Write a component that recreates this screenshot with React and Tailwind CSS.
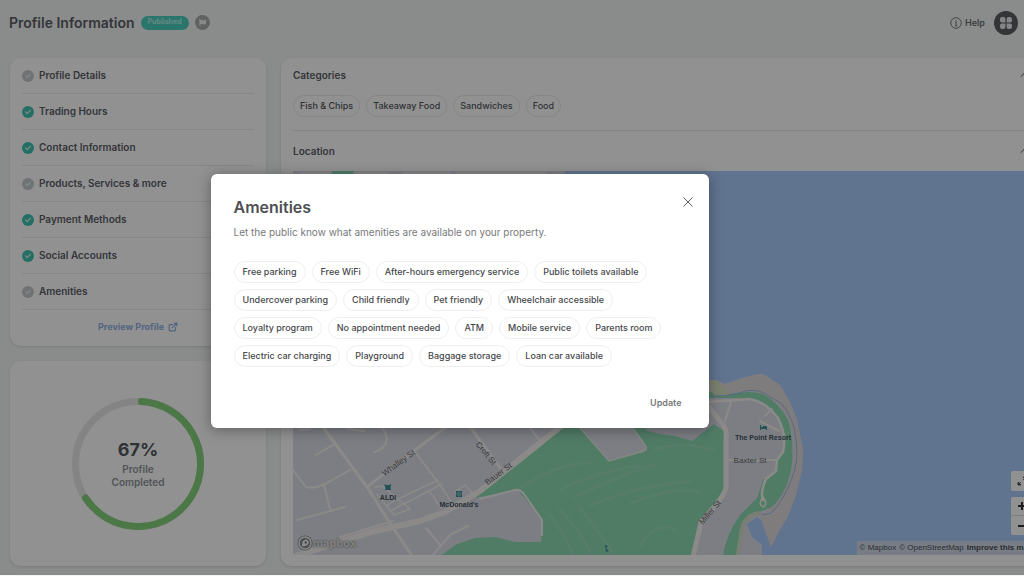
import { useState } from 'react';
import { FaFlag, FaCheck } from 'react-icons/fa';
import { FiExternalLink, FiChevronUp } from 'react-icons/fi';

const steps = [
    { name: 'Profile Details', done: false },
    { name: 'Trading Hours', done: true },
    { name: 'Contact Information', done: true },
    { name: 'Products, Services & more', done: false },
    { name: 'Payment Methods', done: true },
    { name: 'Social Accounts', done: true },
    { name: 'Amenities', done: false },
];

const categories = ['Fish & Chips', 'Takeaway Food', 'Sandwiches', 'Food'];

const amenityRows = [
    ['Free parking', 'Free WiFi', 'After-hours emergency service', 'Public toilets available'],
    ['Undercover parking', 'Child friendly', 'Pet friendly', 'Wheelchair accessible'],
    ['Loyalty program', 'No appointment needed', 'ATM', 'Mobile service', 'Parents room'],
    ['Electric car charging', 'Playground', 'Baggage storage', 'Loan car available'],
];

const Header = () => (
    <header className="flex h-[58px] items-center pb-[13px] pl-[9px] pr-[6px]">
        <h1 className="text-[14px] font-semibold text-[#5c6066]">Profile Information</h1>
        <span className="ml-[6px] flex h-[14px] items-center rounded-full bg-[#4bd0bf] px-[7px] text-[7px] font-bold text-[#b5f0e8]">
            Published
        </span>
        <button aria-label="Flag profile" className="ml-[6px] flex size-[15px] items-center justify-center rounded-full bg-[#a9abab]">
            <FaFlag className="size-[7px] text-[#f0f2f2]" />
        </button>
        <button className="ml-auto flex items-center gap-[3px] text-[9px] font-semibold text-[#6c7075]">
            <svg viewBox="0 0 12 12" className="size-3" fill="none" stroke="currentColor">
                <circle cx="6" cy="6" r="5.3" strokeWidth="0.9" />
                <path d="M5 5h1.2v3.6M5 8.7h2.4M6 2.8v1" strokeWidth="0.9" />
            </svg>
            Help
        </button>
        <button aria-label="Apps" className="ml-[9px] flex size-6 items-center justify-center rounded-full bg-[#5b5d60]">
            <svg viewBox="0 0 14 14" className="size-[14px]" fill="#e8eaea">
                <path d="M3.300 1h1.200a1.900 1.900 0 0 1 1.900 1.900v3.500H2.900A1.900 1.900 0 0 1 1 4.500V3.100A2.100 2.100 0 0 1 3.300 1z" />
                <path d="M9.500 1h1.200A2.200 2.200 0 0 1 13 3.200v1.300a1.900 1.900 0 0 1-1.900 1.900H7.600V2.900A1.900 1.900 0 0 1 9.500 1z" />
                <path d="M2.900 7.600h3.500v3.500A1.900 1.900 0 0 1 4.500 13H3.200A2.200 2.200 0 0 1 1 10.800V9.500a1.900 1.900 0 0 1 1.900-1.900z" />
                <path d="M7.600 7.600h3.500A1.900 1.900 0 0 1 13 9.500v1.300a2.200 2.200 0 0 1-2.200 2.200H9.500a1.900 1.900 0 0 1-1.900-1.900z" />
            </svg>
        </button>
    </header>
);

const StepList = () => (
    <nav className="h-[288px] rounded-[11px] bg-white px-3 shadow-sm">
        <ul>
            {steps.map((step) => (
                <li key={step.name} className="flex h-9 items-center border-b border-[#ececec]">
                    <span className={`flex size-[12px] items-center justify-center rounded-full ${step.done ? 'bg-[#3fc4ae]' : 'bg-[#c6caca]'}`}>
                        <FaCheck className="size-[6px] text-[#e6f2f0]" />
                    </span>
                    <a href="#" className="ml-[5px] text-[10px] font-semibold text-[#5c6066]">{step.name}</a>
                </li>
            ))}
        </ul>
        <a href="#" className="flex h-[34px] items-center justify-center gap-1 text-[9px] font-bold text-[#8fb0e4]">
            Preview Profile
            <FiExternalLink className="size-[10px]" strokeWidth={3} />
        </a>
    </nav>
);

const Progress = () => (
    <section className="relative flex h-[205px] items-center justify-center rounded-[11px] bg-white shadow-sm">
        <svg viewBox="0 0 132 132" className="size-[132px]" fill="none">
            <circle cx="66" cy="66" r="62.5" stroke="#e9e9e9" strokeWidth="7" />
            <path d="M69.500 3.600A62.500 62.500 0 1 1 13.600 100" stroke="#87d27c" strokeWidth="7" strokeLinecap="round" />
        </svg>
        <div className="absolute inset-0 flex flex-col items-center justify-center text-[10px] leading-[13px] font-semibold text-[#8f9498]">
            <strong className="mb-0.5 text-[18px] leading-[22px] font-bold text-[#54585e]">67%</strong>
            <span>Profile</span>
            <span>Completed</span>
        </div>
    </section>
);

const MapView = () => (
    <div className="relative h-[384px] overflow-hidden bg-[#aacafb]">
        <svg viewBox="293 171 731 384" preserveAspectRatio="xMinYMin slice" className="size-full" fill="none">
            {/* land */}
            <path
                d="M293 171H565V300L700 384L716 380L725 384L743 378L761 373.500L768 377L780 385L790 402L797 420L803 450L802 470L796 495L788 516L777 535L771 547L762 521L757 517L747 524L750 532L753 538L762 545V555H293Z"
                fill="#dbdee8"
            />
            <path
                d="M705 381L712 380L725 384L743 378L761 373.500L768 377L780 385L790 402L797 420L803 450L802 470L796 495L788 516L777 535L771 547L761 519L790 480L795 440L780 405L755 391L705 395Z"
                fill="#dddbdc"
            />
            <path d="M332 171H353V175H332Z" fill="#8edab4" />
            {/* parks */}
            <path
                d="M562 428L475 498L518 490L542 520L541 542H515L495 537L475 538L455 545L442 555H693L700 525L725 495V432L714 424L692 441L675 436L660 434L648 431L640 424Z"
                fill="#8edab4"
            />
            <path
                d="M700 388L722 396Q747 389 763 394Q779 403 788 420Q794 440 792 464Q788 492 772 507Q758 512 749 518Q739 532 736 555H723Q726 535 740 515L757 498L763 480L775 472L778 460Q786 452 785 434Q779 412 758 401L740 398H700Z"
                fill="#8edab4"
            />
            <path d="M580 428L609 461L644 451Q648 449 645 445L633 428Z" fill="#dbdee8" stroke="#e9eee3" strokeWidth="1.500" />
            <path d="M710 380L716 380L730 394L714 396Z" fill="#d9e3c4" />
            <g stroke="#98dcb9" strokeWidth="3" strokeLinecap="round">
                <path d="M520 488Q560 462 590 463M575 497Q620 475 655 464M590 506Q640 484 690 482M560 490Q600 470 640 466M630 504Q670 487 700 492" />
                <path d="M550 515Q565 535 572 553M580 508Q605 540 612 552M560 510Q580 530 590 552M640 547Q655 520 675 530M655 450Q680 440 714 450" />
            </g>
            <g stroke="#7fc59a" strokeWidth="0.700" strokeDasharray="1 2">
                <circle cx="533" cy="491" r="3" />
                <circle cx="539" cy="500" r="4" />
                <circle cx="555" cy="510" r="3" />
                <circle cx="568" cy="505" r="4" />
                <circle cx="599" cy="518" r="4" />
                <circle cx="591" cy="453" r="3" />
                <circle cx="698" cy="484" r="4" />
                <circle cx="712" cy="471" r="4" />
            </g>
            {/* streets */}
            <g stroke="#f5f3ef" strokeLinejoin="round" strokeLinecap="round">
                <path d="M293 557L330 545L375 531L420 521L445 512L480 491L565 423" strokeWidth="6" />
                <path d="M322 426L367 487L393 528L413 557M367 487L415 450L446 427M470 427L504 473" strokeWidth="3" />
                <path d="M293 470L306 487Q315 489 325 484L350 470M324 485L330 509M297 520L345 507M316 455L333 445M383 429Q393 445 375 452M415 452L440 485M426 528L441 546M433 555L450 535L468 526M340 537L393 521M300 430L310 429M348 429L364 431" strokeWidth="2" />
                <path d="M480 499L515 490Q520 489 524 494L542 520V535M530 428L540 441" strokeWidth="2" />
                <path d="M375 487L382 486L410 509L394 515L377 494M388 505L398 498M393 510L404 503M400 498L438 480M404 504L442 484M430 492L441 508M440 485L452 503M455 492L465 485L474 495" strokeWidth="1.500" />
                <path d="M707 405L724 426Q727 431 726 438V488Q724 497 701 522L693 557" strokeWidth="5" />
                <path d="M708 402L750 399Q766 402 778 418Q787 436 783 452L777 460L776 471L766 479Q760 492 763 500" strokeWidth="2.500" />
                <path d="M731 402L725 421M729 460H777M765 416L772 409M760 421L779 431" strokeWidth="2" />
                <path d="M763 497Q757 505 764 507Q768 503 763 497" strokeWidth="1.500" />
                <path d="M300 173H330M356 173H388M402 173H450M456 173H545" strokeWidth="1.500" />
                <path d="M760 513Q742 515 741 535L738 555" stroke="#d5dfc8" strokeWidth="4" />
            </g>
            <path d="M712 396Q735 396 745 391Q760 388 770 397L781 403Q795 420 796 440Q799 460 792 478Q783 502 771 513L762 515" stroke="#9dbbe8" strokeWidth="1" />
            {/* places */}
            <g fill="#3d919c">
                <path d="M384 484L386 485H389L391 483.500L390.500 488L391 490H385L385.500 488Z" />
                <path d="M456 491H462V497H456Z" />
                <path d="M760 425H761V427H763V426H766L767 427V430H766V429H761V430H760Z" />
                <path d="M605 545L608 546L606 548L609 551L606 552Z" />
            </g>
            <path d="M457.500 492.500H460.500V495.500H457.500ZM459 491V497M456 494H462" stroke="#a8d3d4" strokeWidth="0.500" />
            <g fill="#5f656d" textAnchor="middle" className="font-['Liberation_Sans'] text-[8px]">
                <text transform="translate(400 465) rotate(-36)">Whalley St</text>
                <text transform="translate(484 455) rotate(50)">Croft St</text>
                <text transform="translate(500 476) rotate(-37)">Bauer St</text>
                <text transform="translate(712 514) rotate(-50)">Miller St</text>
                <text x="750" y="463">Baxter St</text>
            </g>
            <g fill="#42545e" textAnchor="middle" className="font-['Liberation_Sans'] text-[7px] font-bold">
                <text x="388" y="500">ALDI</text>
                <text x="459" y="507">McDonald's</text>
                <text x="763" y="440">The Point Resort</text>
            </g>
        </svg>
        <div className="absolute bottom-1 left-1 flex items-center text-[11px] font-bold text-[#e4e4e4] [text-shadow:0_0_2px_#555]">
            <svg viewBox="0 0 16 16" className="size-4" fill="none">
                <circle cx="8" cy="8" r="7.500" fill="#85888d" />
                <circle cx="8" cy="8" r="6" fill="#85888d" stroke="#f4f4f4" strokeWidth="1.500" />
                <path d="M5 11.500Q4.500 4.500 9 4.500A3 3 0 0 1 11 9.500Q9 11.500 5 11.500z" fill="#f4f4f4" />
                <circle cx="8.700" cy="7.500" r="1.200" fill="#85888d" />
            </svg>
            mapbox
        </div>
        <div className="absolute -right-2 bottom-5 flex w-[21px] flex-col gap-[6px]">
            <button aria-label="Enter fullscreen" className="flex h-5 items-center justify-center rounded-xs bg-white text-[#444]">
                <svg viewBox="0 0 10 10" className="size-[10px]" fill="currentColor" stroke="currentColor">
                    <path d="M6 4L9 1M9 4V1H6zM4 6L1 9M1 6V9H4z" strokeWidth="0.800" />
                </svg>
            </button>
            <div className="flex flex-col rounded-xs bg-white text-[#333]">
                <button aria-label="Zoom in" className="flex h-[19px] items-center justify-center border-b border-[#ddd]">
                    <svg viewBox="0 0 8 8" className="size-2" stroke="currentColor"><path d="M0 4h8M4 0v8" strokeWidth="2" /></svg>
                </button>
                <button aria-label="Zoom out" className="flex h-[19px] items-center justify-center">
                    <svg viewBox="0 0 8 8" className="size-2" stroke="currentColor"><path d="M0 4h8" strokeWidth="2" /></svg>
                </button>
            </div>
        </div>
        <div className="absolute -right-[13px] bottom-0 flex h-[14px] items-center gap-[3px] bg-[#d3dcea] pr-1 pl-[3px] font-['Liberation_Sans'] text-[8px] whitespace-nowrap text-[#4c5057]">
            <a href="#">© Mapbox</a>
            <a href="#">© OpenStreetMap</a>
            <a href="#" className="font-bold">Improve this map</a>
        </div>
    </div>
);

const SectionTitle = ({ children }) => (
    <div className="flex items-center justify-between">
        <h2 className="text-[10px] leading-4 font-semibold text-[#5c6066]">{children}</h2>
        <button aria-label={`Collapse ${children}`} className="-mr-[6px] text-[#55585c]">
            <FiChevronUp className="size-3" />
        </button>
    </div>
);

const AmenitiesDialog = () => {
    const [selected, setSelected] = useState([]);

    const toggle = (name) => {
        setSelected(selected.includes(name) ? selected.filter((item) => item !== name) : [...selected, name]);
    };

    return (
        <div role="dialog" aria-labelledby="amenities-title" className="w-[498px] rounded-md bg-white px-[23px] pb-[17px] shadow-[0_2px_14px_rgba(0,0,0,0.35)]">
            <div className="flex items-center justify-between pt-[22px]">
                <h2 id="amenities-title" className="text-[16px] leading-[22px] font-semibold text-[#4e5053]">Amenities</h2>
                <button aria-label="Close" className="-mt-[10px] -mr-[11px] p-1 text-[#606060]">
                    <svg viewBox="0 0 10 10" className="size-[10px]" stroke="currentColor">
                        <path d="M0.500 0.500l9 9M9.500 0.500l-9 9" strokeWidth="1" />
                    </svg>
                </button>
            </div>
            <p className="mt-[7px] text-[10px] leading-[14px] text-[#77797b]">
                Let the public know what amenities are available on your property.
            </p>
            <div className="mt-[22px] flex flex-col gap-[6px]">
                {amenityRows.map((row) => (
                    <div key={row[0]} className="flex gap-[6px]">
                        {row.map((name) => (
                            <button
                                key={name}
                                onClick={() => toggle(name)}
                                aria-pressed={selected.includes(name)}
                                className={`h-[22px] rounded-full border px-2 text-[9px] font-medium whitespace-nowrap text-[#46484b] ${selected.includes(name)
                                    ? 'border-[#3fc4ae]'
                                    : 'border-[#efefef]'
                                    }`}
                            >
                                {name}
                            </button>
                        ))}
                    </div>
                ))}
            </div>
            <div className="mt-[28px] flex justify-end pr-1">
                <button className="text-[9px] leading-4 font-semibold text-[#77797b]">Update</button>
            </div>
        </div>
    );
};

const App = () => (
    <div className="relative min-h-screen overflow-hidden bg-[#f2f5f4] font-['Inter',sans-serif]">
        <Header />
        <main className="flex gap-[15px] pb-[10px] pl-[10px]">
            <aside className="flex w-64 flex-col gap-[15px]">
                <StepList />
                <Progress />
            </aside>
            <div className="min-w-0 flex-1 rounded-l-[11px] bg-white pt-[9px] pb-[11px] pl-3 shadow-sm">
                <SectionTitle>Categories</SectionTitle>
                <div className="mt-3 flex gap-[6px] border-b border-[#e8e8e8] pb-[13px]">
                    {categories.map((name) => (
                        <span key={name} className="flex h-[22px] items-center rounded-full border border-[#ebebeb] px-[6px] text-[9px] font-medium text-[#54585e]">
                            {name}
                        </span>
                    ))}
                </div>
                <div className="pt-3 pb-3">
                    <SectionTitle>Location</SectionTitle>
                </div>
                <MapView />
            </div>
        </main>
        <div className="absolute inset-x-0 top-0 bottom-px flex items-center justify-center bg-black/43 pt-[27px] pr-[105px]">
            <AmenitiesDialog />
        </div>
    </div>
);

export default App;
